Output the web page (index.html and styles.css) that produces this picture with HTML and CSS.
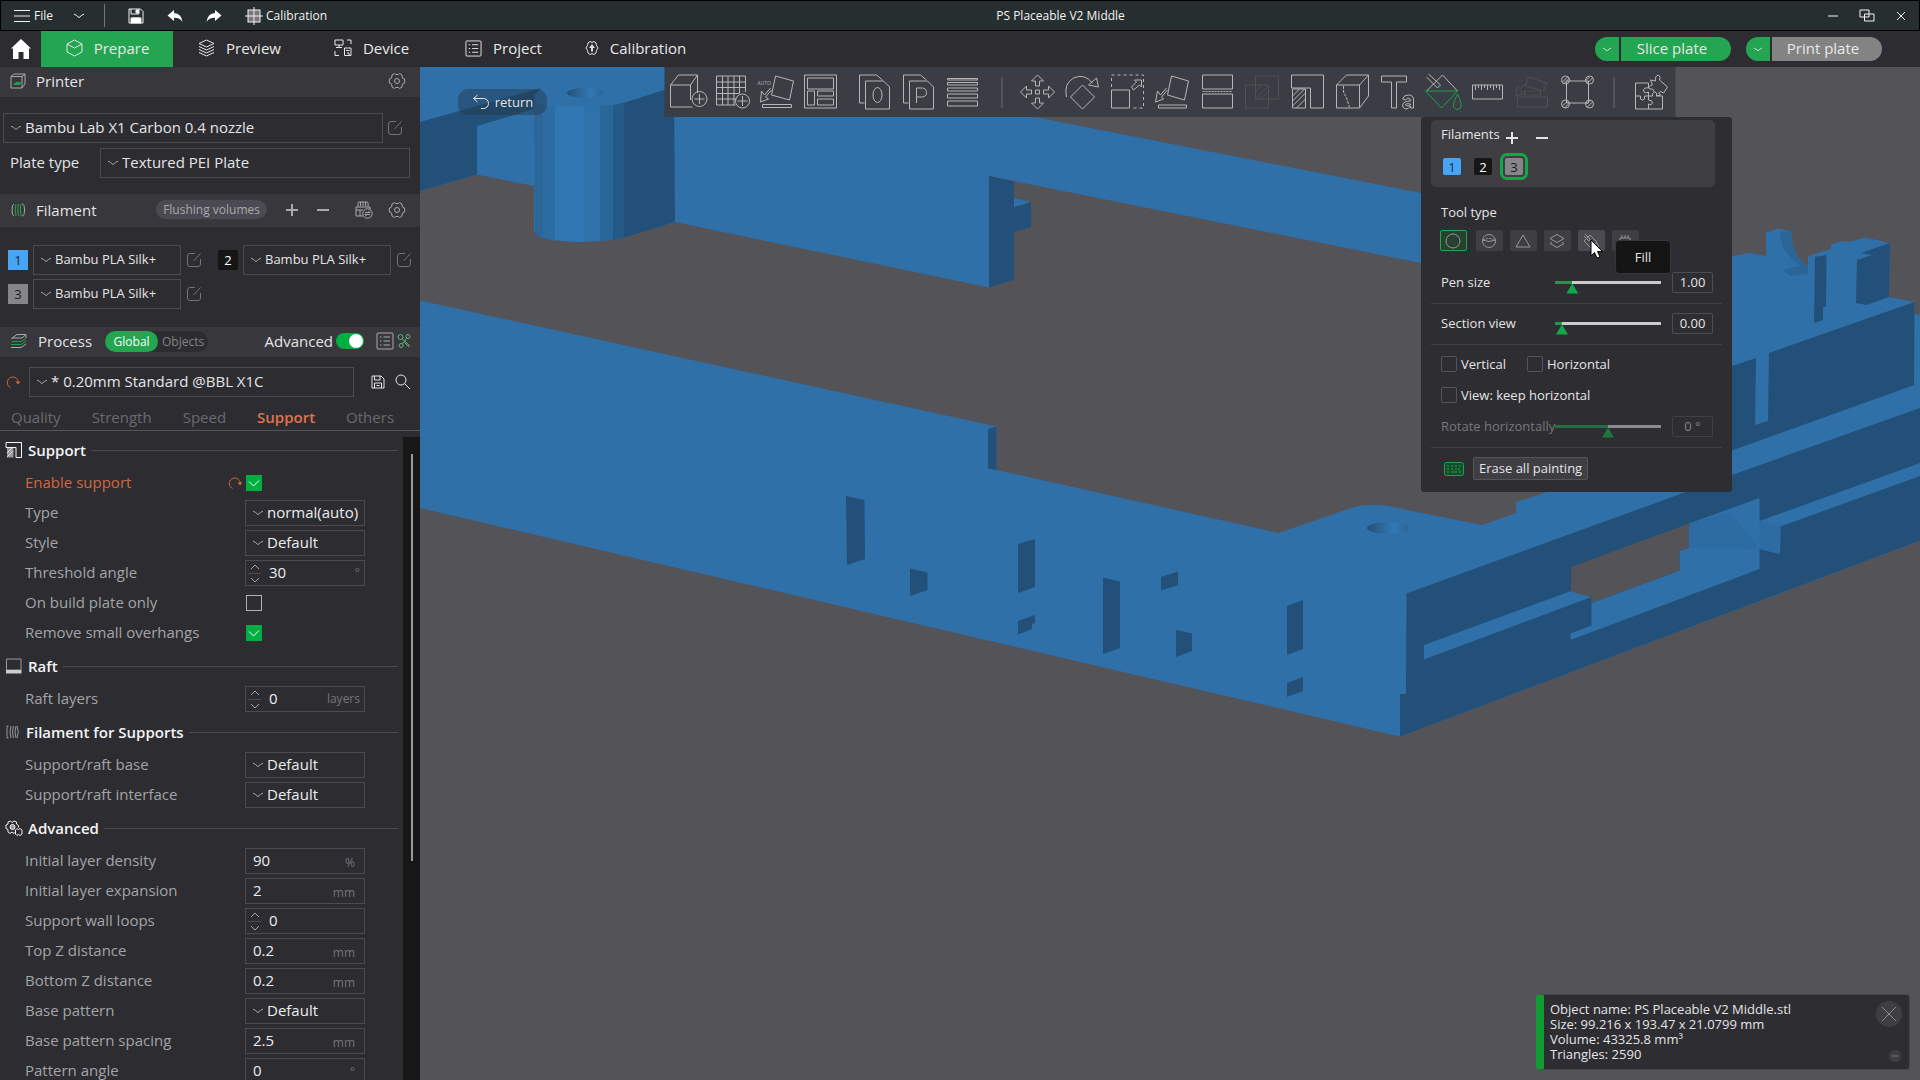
FILE: index.html
```html
<!DOCTYPE html>
<html lang="en">
<head>
  <meta charset="UTF-8" />
  <meta name="viewport" content="width=device-width, initial-scale=1" />
  <title>PS Placeable V2 Middle</title>
  <link rel="stylesheet" href="styles.css">
</head>
<body>

  <!-- shared icons -->
  <svg class="defs" width="0" height="0" aria-hidden="true">
    <symbol id="chev" viewBox="0 0 12 6"><path d="M1 1.2Q3 1.6 6 4.6Q9 1.6 11 1.2"/></symbol>
    <symbol id="up" viewBox="0 0 10 6"><path d="M1 5L5 1L9 5"/></symbol>
    <symbol id="down" viewBox="0 0 10 6"><path d="M1 1L5 5L9 1"/></symbol>
    <symbol id="edit" viewBox="0 0 16 16"><path d="M9 1.5H4Q1.5 1.5 1.5 4V12Q1.5 14.500 4 14.500H12Q14.500 14.500 14.500 12V7M7.500 9L14.500 1.500"/></symbol>
    <symbol id="gear" viewBox="0 0 18 18"><path d="M6.500 1.500L7.500 2.500H10.500L11.500 1.500L14 3L14.200 5L15 6.500L16.700 7V11L15 11.500L14.200 13L14 15L11.500 16.500L10.500 15.500H7.500L6.500 16.500L4 15L3.800 13L3 11.500L1.300 11V7L3 6.500L3.800 5L4 3Z"/><circle cx="9" cy="9" r="2.500"/></symbol>
    <symbol id="plus" viewBox="0 0 12 12"><path d="M6 0V12M0 6H12"/></symbol>
    <symbol id="minus" viewBox="0 0 12 12"><path d="M0 6H12"/></symbol>
    <symbol id="reset" viewBox="0 0 14 14"><path d="M4.500 12.500A5.500 5.500 0 1 1 12.300 7"/><path d="M9.500 6.500H14.300L12 9.500Z" fill="currentColor" stroke="none"/></symbol>
    <symbol id="list" viewBox="0 0 18 18"><rect x="1" y="1" width="16" height="16" rx="1"/><path d="M4 5H5.500M7.500 5H14M4 9H5.500M7.500 9H14M4 13H5.500M7.500 13H14"/></symbol>
    <symbol id="check" viewBox="0 0 16 16"><path d="M3 6.500L7.500 11L13 5.500"/></symbol>
  </svg>

  <header class="titlebar">
    <button class="file-btn"><svg width="16" height="14"><path d="M0 1.500H16M0 7H16M0 12.500H16"/></svg>File</button>
    <button class="file-more" aria-label="File menu"><svg width="12" height="6"><use href="#chev"/></svg></button>
    <span class="bar-sep"></span>
    <button aria-label="Save"><svg width="16" height="16" viewBox="0 0 16 16"><path d="M1 1H12.500L15 3.500V15H1ZM3 1V6H11V1M3.500 15V10H12.500V15"/><path d="M3 10H13V15H3ZM8 2H10.500V5H8Z" fill="#fff"/></svg></button>
    <button aria-label="Undo"><svg width="16" height="14" viewBox="0 0 16 14"><path d="M7 1V4Q14.500 4.500 15.500 13Q12.500 8.500 7 8.800V12L.5 6.500Z" fill="#fff" stroke="none"/></svg></button>
    <button aria-label="Redo"><svg width="16" height="14" viewBox="0 0 16 14"><path d="M9 1V4Q1.500 4.500 .5 13Q3.500 8.500 9 8.800V12L15.500 6.500Z" fill="#fff" stroke="none"/></svg></button>
    <button class="calib"><svg width="18" height="18" viewBox="0 0 18 18"><rect x="3" y="3" width="12" height="12" fill="#777"/><path d="M9 0V6M9 12V18M0 9H6M12 9H18M6 9H12M9 6V12" /></svg>Calibration</button>
    <h1>PS Placeable V2 Middle</h1>
    <div class="win-controls">
      <button aria-label="Minimize"><svg width="10" height="10"><path d="M0 5H10"/></svg></button>
      <button aria-label="Restore"><svg width="16" height="14" viewBox="0 0 16 14"><path d="M1 1H10V8H1ZM5.500 5H15V12H5.500Z"/></svg></button>
      <button aria-label="Close"><svg width="10" height="10"><path d="M1 1L9 9M9 1L1 9"/></svg></button>
    </div>
  </header>

  <nav class="tabbar">
    <a class="home" href="#" aria-label="Home"><svg width="20" height="20" viewBox="0 0 20 20"><path d="M10 0L20 9.500H18V20H12.500V13H7.500V20H2V9.500H0Z" fill="#fff" stroke="none"/></svg></a>
    <a class="tab active" href="#"><svg width="17" height="18" viewBox="0 0 17 18"><path d="M8.500 1L16 5V13L8.500 17L1 13V5ZM1 5L8.500 9L16 5"/></svg>Prepare</a>
    <a class="tab" href="#"><svg width="17" height="18" viewBox="0 0 17 18"><path d="M8.500 1L16 4.500L8.500 8L1 4.500ZM1 7.500L8.500 11L16 7.500M1 10.500L8.500 14L16 10.500M1 13.500L8.500 17L16 13.500"/></svg>Preview</a>
    <a class="tab" href="#"><svg width="18" height="18" viewBox="0 0 18 18"><path d="M1 1H9V6H1ZM5 6V8M2 8.500H8M13 1H17V5M1 12V16.500H5M10.500 9H17V16.500H10.500ZM12 11.500H15.500M13 14H15V16"/></svg>Device</a>
    <a class="tab" href="#"><svg width="17" height="17"><use href="#list"/></svg>Project</a>
    <a class="tab" href="#"><svg width="14" height="16" viewBox="0 0 14 16"><path d="M5 1.500L7 2.500L9 1.500L11 3L11.500 5.500L13 8L11.500 10.500L11 13L9 14.500L7 13.500L5 14.500L3 13L2.500 10.500L1 8L2.500 5.500L3 3Z"/><path d="M7 4L10 8H8V11.500H6V8H4Z" fill="#ddd" stroke="none"/></svg>Calibration</a>
    <div class="plate-actions">
      <div class="pill">
        <button class="pill-drop" aria-label="Slice options"><svg width="10" height="5"><use href="#chev"/></svg></button>
        <button class="pill-main">Slice plate</button>
      </div>
      <div class="pill">
        <button class="pill-drop" aria-label="Print options"><svg width="10" height="5"><use href="#chev"/></svg></button>
        <button class="pill-main off">Print plate</button>
      </div>
    </div>
  </nav>

  <div class="workspace">

    <aside class="sidebar">
      <div class="head">
        <svg width="16" height="16" viewBox="0 0 16 16"><path d="M1 3.500L4 1H15V11L12 15H1ZM1 3.500H12L15 1M12 3.500V15"/><path d="M3 12H10L11 9H6Z" fill="#1fa04c" stroke="none"/></svg>
        <h2>Printer</h2>
        <button class="push" aria-label="Printer settings"><svg width="18" height="18"><use href="#gear"/></svg></button>
      </div>
      <div class="printer">
        <div class="line">
          <div class="select wide"><svg width="12" height="6"><use href="#chev"/></svg><select aria-label="Printer"><option>Bambu Lab X1 Carbon 0.4 nozzle</option></select></div>
          <button class="edit" aria-label="Edit printer"><svg width="16" height="16"><use href="#edit"/></svg></button>
        </div>
        <div class="line plate">
          <label for="plate">Plate type</label>
          <div class="select wide"><svg width="12" height="6"><use href="#chev"/></svg><select id="plate"><option>Textured PEI Plate</option></select></div>
        </div>
      </div>

      <div class="head head-filament">
        <svg width="16" height="16" viewBox="0 0 16 16"><path d="M4 2Q2 2 2 8Q2 14 4 14M12 2Q14.500 2 14.500 8Q14.500 14 12 14"/><path d="M6 2Q4.500 8 6 14M8.500 2Q7 8 8.500 14M11 2Q9.500 8 11 14" stroke="#1fa04c"/></svg>
        <h2>Filament</h2>
        <button class="flush push">Flushing volumes</button>
        <button aria-label="Add filament"><svg class="bold" width="12" height="12"><use href="#plus"/></svg></button>
        <button aria-label="Remove filament"><svg class="bold" width="12" height="12"><use href="#minus"/></svg></button>
        <button class="ams" aria-label="Sync filaments"><svg width="18" height="18" viewBox="0 0 18 18"><path d="M3 6V2Q3 1 4 1H12Q13 1 13 2V6M5.500 1V5M8 1V5M10.500 1V5M1 6H15V9M1 6V15H8M5 9V15M1 9H8"/><circle cx="12.500" cy="12.500" r="4.700"/><path d="M10 11.500H15L13.500 10M15 13.500H10L11.500 15"/></svg></button>
        <button aria-label="Filament settings"><svg width="18" height="18"><use href="#gear"/></svg></button>
      </div>
      <div class="filaments">
        <div class="filament"><span class="chip blue">1</span><div class="select"><svg width="12" height="6"><use href="#chev"/></svg><select aria-label="Filament 1"><option>Bambu PLA Silk+</option></select></div><button class="edit" aria-label="Edit filament 1"><svg width="16" height="16"><use href="#edit"/></svg></button></div>
        <div class="filament"><span class="chip black">2</span><div class="select"><svg width="12" height="6"><use href="#chev"/></svg><select aria-label="Filament 2"><option>Bambu PLA Silk+</option></select></div><button class="edit" aria-label="Edit filament 2"><svg width="16" height="16"><use href="#edit"/></svg></button></div>
        <div class="filament"><span class="chip gray">3</span><div class="select"><svg width="12" height="6"><use href="#chev"/></svg><select aria-label="Filament 3"><option>Bambu PLA Silk+</option></select></div><button class="edit" aria-label="Edit filament 3"><svg width="16" height="16"><use href="#edit"/></svg></button></div>
      </div>

      <div class="head head-process">
        <svg width="18" height="16" viewBox="0 0 18 16"><path d="M2 5L7 1.500H16L12 5ZM2 5V6M1 14.500H11L16 11M16 2V5"/><path d="M2 8.500H11L16 5.500M1 11.500H11L16 8" stroke="#1fa04c"/></svg>
        <h2>Process</h2>
        <div class="scope"><button class="on">Global</button><button>Objects</button></div>
        <label class="adv push" for="adv">Advanced</label>
        <input class="toggle" type="checkbox" id="adv" checked>
        <button class="listbtn" aria-label="Parameter list"><svg width="18" height="18"><use href="#list"/></svg></button>
        <button class="nodes" aria-label="Compare presets"><svg width="14" height="16" viewBox="0 0 14 16"><circle cx="3.500" cy="4" r="2.500"/><circle cx="11" cy="3.500" r="2"/><circle cx="4" cy="12.500" r="2"/><path d="M9.700 5.200L5.300 11M5.500 6L13 13M7.500 9.500L12 14"/></svg></button>
      </div>
      <div class="preset line">
        <button class="orange" aria-label="Reset preset"><svg width="14" height="14"><use href="#reset"/></svg></button>
        <div class="select wide"><svg width="12" height="6"><use href="#chev"/></svg><select aria-label="Process preset"><option>* 0.20mm Standard @BBL X1C</option></select></div>
        <button class="save" aria-label="Save preset"><svg width="14" height="14" viewBox="0 0 14 14"><path d="M1 1H10L13 4V13H1ZM3.500 1V5H9V1M3.500 13V8H10.500V13M5.500 10.500H8.500"/></svg></button>
        <button aria-label="Search"><svg width="16" height="16" viewBox="0 0 16 16"><circle cx="6" cy="6" r="5"/><path d="M9.500 9.500L15 15"/></svg></button>
      </div>
      <div class="subtabs">
        <a href="#">Quality</a><a href="#">Strength</a><a href="#">Speed</a><a class="active" href="#">Support</a><a href="#">Others</a>
      </div>

      <div class="settings">
        <form class="groups">
          <section>
            <h3><svg width="18" height="18" viewBox="0 0 18 18"><path d="M1 1.500H16.500V16.500H11V6.500H1Z"/><path d="M2 7H8.500V16.500H2Z" fill="#999" stroke="none"/><path d="M2 12L7 7M2 16L8 10" stroke="#ddd"/></svg>Support</h3>
            <div class="row changed"><label for="s1">Enable support</label><button type="button" class="orange" aria-label="Reset"><svg width="14" height="14"><use href="#reset"/></svg></button><span class="check"><input type="checkbox" id="s1" checked><svg width="16" height="16"><use href="#check"/></svg></span></div>
            <div class="row"><label for="s2">Type</label><div class="select"><svg width="12" height="6"><use href="#chev"/></svg><select id="s2"><option>normal(auto)</option></select></div></div>
            <div class="row"><label for="s3">Style</label><div class="select"><svg width="12" height="6"><use href="#chev"/></svg><select id="s3"><option>Default</option></select></div></div>
            <div class="row"><label for="s4">Threshold angle</label><div class="field"><span class="spin"><svg width="10" height="6"><use href="#up"/></svg><svg width="10" height="6"><use href="#down"/></svg></span><input id="s4" type="text" value="30"><span class="unit deg">°</span></div></div>
            <div class="row"><label for="s5">On build plate only</label><span class="check"><input type="checkbox" id="s5"><svg width="16" height="16"><use href="#check"/></svg></span></div>
            <div class="row"><label for="s6">Remove small overhangs</label><span class="check"><input type="checkbox" id="s6" checked><svg width="16" height="16"><use href="#check"/></svg></span></div>
          </section>
          <section>
            <h3><svg width="18" height="18" viewBox="0 0 18 18"><path d="M1.500 2H16V13H1.500Z" stroke="#999"/><path d="M1 13H16.500V16.500H1Z" fill="#ccc" stroke="none"/></svg>Raft</h3>
            <div class="row"><label for="s7">Raft layers</label><div class="field"><span class="spin"><svg width="10" height="6"><use href="#up"/></svg><svg width="10" height="6"><use href="#down"/></svg></span><input id="s7" type="text" value="0"><span class="unit long">layers</span></div></div>
          </section>
          <section>
            <h3><svg width="16" height="16" viewBox="0 0 16 16"><path d="M3.500 2H2V14H3.500M6 2Q4 8 6 14M8.500 2Q6.500 8 8.500 14M11 2Q9 8 11 14M12 2Q14.500 8 12 14" stroke="#999"/></svg>Filament for Supports</h3>
            <div class="row"><label for="s8">Support/raft base</label><div class="select"><svg width="12" height="6"><use href="#chev"/></svg><select id="s8"><option>Default</option></select></div></div>
            <div class="row"><label for="s9">Support/raft interface</label><div class="select"><svg width="12" height="6"><use href="#chev"/></svg><select id="s9"><option>Default</option></select></div></div>
          </section>
          <section>
            <h3><svg width="18" height="18" viewBox="0 0 18 18"><path d="M10.500 13L9 14.500L7 13L5 14.500L3 13V10.500L1 9.500V6L3 5V3L5.500 2L7 3.500L9 2L11.500 3V5L13.500 6.500V8.500"/><circle cx="7.500" cy="8" r="2.500" fill="#999"/><path d="M12 9.500L13.500 10.500L15 9.500L17 11V13L17 15L15 16.500L13.500 15.500L12 16.500L10.500 15V11Z"/></svg>Advanced</h3>
            <div class="row"><label for="a1">Initial layer density</label><div class="field"><input id="a1" type="text" value="90"><span class="unit">%</span></div></div>
            <div class="row"><label for="a2">Initial layer expansion</label><div class="field"><input id="a2" type="text" value="2"><span class="unit">mm</span></div></div>
            <div class="row"><label for="a3">Support wall loops</label><div class="field"><span class="spin"><svg width="10" height="6"><use href="#up"/></svg><svg width="10" height="6"><use href="#down"/></svg></span><input id="a3" type="text" value="0"></div></div>
            <div class="row"><label for="a4">Top Z distance</label><div class="field"><input id="a4" type="text" value="0.2"><span class="unit">mm</span></div></div>
            <div class="row"><label for="a5">Bottom Z distance</label><div class="field"><input id="a5" type="text" value="0.2"><span class="unit">mm</span></div></div>
            <div class="row"><label for="a6">Base pattern</label><div class="select"><svg width="12" height="6"><use href="#chev"/></svg><select id="a6"><option>Default</option></select></div></div>
            <div class="row"><label for="a7">Base pattern spacing</label><div class="field"><input id="a7" type="text" value="2.5"><span class="unit">mm</span></div></div>
            <div class="row"><label for="a8">Pattern angle</label><div class="field"><input id="a8" type="text" value="0"><span class="unit deg2">°</span></div></div>
          </section>
        </form>
        <div class="track"><div class="thumb"></div></div>
      </div>
    </aside>

    <main class="canvas">
      <!-- 3D view -->
      <svg class="model" viewBox="420 67 1500 1013" preserveAspectRatio="xMinYMin slice" role="img" aria-label="PS Placeable V2 Middle">
        <defs>
          <linearGradient id="hole"><stop offset="0" stop-color="#225078"/><stop offset=".35" stop-color="#2b6699"/><stop offset=".65" stop-color="#3179b5"/><stop offset="1" stop-color="#2a6598"/></linearGradient>
        </defs>
        <g class="lit">
          <path d="M420 67H676V222L620 238L534 232V186L477 174.500L420 191Z"/>
          <path d="M674 67H1031V117Q1040 117.500 1060 122L1421 193V263L989 176V287.500L675 222Z"/>
          <path d="M420 300.500L996.500 426.500V470L1278.500 533L1354 507Q1377 502 1406.500 510L1482.500 525L1516 513V502L1547 492L1600 420H1732V256L1749 253L1766 256V232.500L1778 228.500L1791 231Q1793 259 1808 266V256L1831 249V244.500L1843 241L1849 242L1865 237.500L1890 243L1889 297L1914.500 302V314L1920 315V540.500L1400 736.500L420 508Z"/>
        </g>
        <g class="dark">
          <path d="M420 122L541 88L534 95V109L477 126V174.500L420 191Z"/>
          <path d="M620 104L664 90H674L675 222L624 237.500Z"/>
          <path d="M989 176L1014 181.500V279.500L989 287.500ZM1014 207L1031 202V227L1014 232Z"/>
          <path d="M988 429L996.500 426.500V470L988 468.500Z"/>
          <path d="M846 496L864.500 500L865 559L847 565ZM910 568.500L927.500 572.500V590L910 596ZM1018 544L1035 539V587L1018 593ZM1018 621L1035 615V623L1032 624V629L1018 634.500ZM1103 577.500L1120 581.500V648L1103 654ZM1161 577L1178 571.500V585L1161 590.500ZM1176 630L1192 633.500V651L1176 657ZM1287 606L1303 600V649L1287 655ZM1287 683L1303 677V691L1287 697Z"/>
          <path d="M1732 366L1756 358L1755 425L1768 421L1769 353L1914.500 302L1914 385L1732 450.500Z"/>
          <path d="M1815 257L1826.500 255L1826 307H1823V320L1814 323Z"/>
          <path d="M1857 260L1872 255L1861 253L1890 243L1889 297L1866.500 305L1856 303Z"/>
          <path d="M1406.500 593.500L1686 492L1732 475L1920 408V540.500L1400 736.500V694H1406Z"/>
        </g>
        <g class="lit">
          <path d="M1014 198L1031 202L1014 207Z"/>
          <path d="M1920 463L1759.500 521V498L1689 523.500V548L1679.500 550.500V570.500L1591.500 603V625.500L1570.500 633.500V640L1759.500 569V549L1780 554L1780.500 526.500L1920 476Z"/>
          <path d="M1424 645L1571 591L1591.500 597L1424 659.500Z"/>
        </g>
        <path d="M1571 567L1689 523.500V548L1679.500 550.500V570.500L1591.500 603V597L1571 591.500Z" fill="#545358"/>
        <path d="M1730 512L1759.500 549L1689 548V523.500ZM1759.500 521L1780.500 526.500L1780 554L1759.500 549Z" fill="#2d6ca2"/>
        <path d="M1780 232L1791 231Q1793 259 1808 266V274L1790 276L1783 270L1800 266Q1780 252 1780 232Z" fill="#2a6598"/>
        <!-- corner post -->
        <path d="M534 97Q537 104 543 105V239Q535 236 535 230Z" fill="#2b6699"/>
        <path d="M543 105L555 106V241L543 238Z" fill="#2d6ca3"/>
        <path d="M555 106H584V242Q568 242 555 240Z" fill="#3076b2"/>
        <path d="M584 106H600V241L584 242Z" fill="#2f71ab"/>
        <path d="M600 106L613 105V240L600 241.500Z" fill="#2a6699"/>
        <path d="M613 105L624 103V237.500L613 240Z" fill="#245a88"/>
        <ellipse cx="585" cy="93" rx="18" ry="5" fill="url(#hole)"/>
        <ellipse cx="1388" cy="528" rx="21" ry="6" fill="url(#hole)"/>
      </svg>

      <button class="return"><svg width="18" height="16" viewBox="0 0 18 16"><path d="M5.500 1L1.500 4.500L5.500 8M1.500 4.500H11.500A5 5 0 0 1 11.500 14.500H9"/></svg>return</button>

      <div class="toolbar">
        <div class="tools small">
          <button aria-label="Add"><svg viewBox="0 0 36 36"><path d="M0 11L8 1H27L20 11ZM0 11V33H22M20 11V26M27 1V19"/><circle cx="29" cy="25" r="7.500"/><path d="M29 20V30M24 25H34"/></svg></button>
          <button aria-label="Add plate"><svg viewBox="0 0 36 36"><path d="M2 2H31V18M2 2V31H21M2 8H31M2 13.500H31M2 19.500H25M2 25H22M8 2V31M13.500 2V31M19.500 2V31M25 2V19"/><circle cx="28" cy="27" r="7"/><path d="M28 22V32M23 27H33"/></svg></button>
          <button aria-label="Auto orient"><svg viewBox="0 0 36 36"><path d="M17 2L35 7L31 26L13 21ZM12 14L6 21L3 17L2 28L10 25L7 23L13 16M4 30.500H33V33.500H4Z"/><text x="-1" y="11">AUTO</text></svg></button>
          <button aria-label="Arrange"><svg viewBox="0 0 36 36"><path d="M2 1H34V34H2ZM5 4H31V15H5ZM5 17H12V31H5ZM15 17H31V22H15ZM15 25H31V31H15Z"/></svg></button>
        </div>
        <div class="tools small pages">
          <button aria-label="Objects"><svg viewBox="0 0 36 36"><path d="M8 29H3V1H20L26 6M9 7H27L33 13V35H9Z"/><ellipse cx="21" cy="21" rx="4.500" ry="7.500"/></svg></button>
          <button aria-label="Parts"><svg viewBox="0 0 36 36"><path d="M8 29H3V1H20L26 6M9 7H27L33 13V35H9ZM16 29V14H21Q26 14 26 18.500Q26 23 21 23H16"/></svg></button>
          <button aria-label="Variable layer height"><svg viewBox="0 0 36 36"><path d="M3 4.500H33V6H3ZM3 8.500H33V11H3ZM3 14H33V17H3ZM3 20H33V24H3ZM3 27H33V32H3Z"/></svg></button>
        </div>
        <span class="tool-sep"></span>
        <div class="tools">
          <button aria-label="Move"><svg viewBox="0 0 36 36"><path d="M18 1L24 7H20V12H16V7H12ZM18 35L24 29H20V24H16V29H12ZM1 18L7 12V16H12V20H7V24ZM35 18L29 12V16H24V20H29V24ZM16 16H20V20H16Z"/></svg></button>
          <button aria-label="Rotate"><svg viewBox="0 0 36 36"><path d="M18 11L30 23L18 35L6 23ZM2 23Q-1 10 9 4Q20 -1 28 9M24 11L34 13L32 4Z"/></svg></button>
          <button aria-label="Scale"><svg viewBox="0 0 36 36"><path d="M2 16H20V34H2Z"/><path d="M2 13V1H34V34H22" stroke-dasharray="3 3"/><path d="M22 13L27 8L25 6H32V13L30 11L24 16Z"/></svg></button>
          <button aria-label="Lay on face"><svg viewBox="0 0 36 36"><path d="M17 2L34 7L30 26L13 21ZM12 14L6 21L3 17L1 28L9 25L7 23L13 16M4 31H32V34H4Z"/></svg></button>
          <button aria-label="Cut"><svg viewBox="0 0 36 36"><path d="M3 1H33V15H3ZM3 20H33V34H3Z"/><path d="M3 17.500H33" stroke-dasharray="2 1"/></svg></button>
          <button class="dim" aria-label="Mesh boolean"><svg viewBox="0 0 36 36"><path d="M11 2H34V25H11ZM1 11H24V34H1ZM12 17L17 12M12 24L23 13M16 25L23 18"/></svg></button>
          <button aria-label="Support painting"><svg viewBox="0 0 36 36"><path d="M2 1H34V34H21V14H2Z"/><path d="M3 15H16V34H3ZM3 22L10 15M3 27L15 15M3 32L16 19M7 34L16 25"/></svg></button>
          <button aria-label="Seam painting"><svg viewBox="0 0 36 36"><path d="M2 11L12 1H34L25 11ZM2 11V34H25V11M34 1V22L25 34"/><path d="M9 12V18L12 24L15 33" stroke-dasharray="3 1"/></svg></button>
          <button aria-label="Text shape"><svg viewBox="0 0 36 36"><path d="M2 2H27V8H17V34H12V8H2Z"/><path d="M23 25Q24 21 29 21Q34 21 34 26V34H31V32Q29 35 26 35Q23 34 23 31Q24 27 31 27Q31 24 28 24L26 26ZM31 30Q26 29 26 31Q28 33 31 31Z"/></svg></button>
          <button aria-label="Color painting"><svg viewBox="0 0 36 36"><path d="M2 17L18 1L33 17M4 0L16 11L13 14L2 3"/><path d="M1 17H33L17 34ZM33 20Q28 30 29 33Q31 37 35 35Q39 32 33 20Z" stroke="#1fa04c"/></svg></button>
          <button aria-label="Measure"><svg viewBox="0 0 36 36"><path d="M3 11H33V25H3ZM6 11V16M9 11V14M12 11V16M15 11V14M18 11V16M21 11V14M24 11V16M27 11V14M30 11V16"/></svg></button>
          <button class="dim" aria-label="Assembly measure"><svg viewBox="0 0 36 36"><path d="M14 3L32 9L29 17L11 12ZM10 10L6 15L3 12L1 22L8 20L6 17M10 17V22M26 17V22M3 23H33V33H3Z"/><path d="M10 17H26M10 21H26" stroke-dasharray="2 1"/></svg></button>
          <button aria-label="Brim ears"><svg viewBox="0 0 36 36"><path d="M7 7H29V29H7Z"/><circle cx="6" cy="6" r="4"/><circle cx="30" cy="6" r="4"/><circle cx="6" cy="30" r="4"/><circle cx="30" cy="30" r="4"/><path d="M3 8L8 3M4 10L10 4M28 9L33 4M27 6L30 3M3 32L8 27M5 34L10 29M28 33L33 28M27 30L31 26"/></svg></button>
        </div>
        <span class="tool-sep narrow"></span>
        <div class="tools">
          <button aria-label="Assembly view"><svg viewBox="0 0 36 36"><path d="M3 9H16V14Q11 13 11 17Q12 20 16 18V22H12Q13 26 10 26Q7 26 8 22H3ZM3 22V35H30V22H24Q25 18 22 18Q19 19 20 22H16V26Q20 26 20 29Q19 32 16 30V35M18 6L23 7Q22 2 26 1Q29 3 27 6L35 13L31 19Q28 16 26 19L28 21L24 22M18 6L20 11Q15 12 17 15L20 15L22 18"/></svg></button>
        </div>
      </div>

      <section class="paint">
        <div class="colors">
          <div class="colors-head"><h4>Filaments</h4><button aria-label="Add"><svg class="bold" width="12" height="12"><use href="#plus"/></svg></button><button aria-label="Remove"><svg class="bold" width="12" height="12"><use href="#minus"/></svg></button></div>
          <div class="swatches"><button class="chip blue">1</button><button class="chip black">2</button><button class="chip gray picked">3</button></div>
        </div>
        <h4 class="tool-title">Tool type</h4>
        <div class="types">
          <button class="picked" aria-label="Circle"><svg width="16" height="16" viewBox="0 0 16 16"><circle cx="8" cy="8" r="7"/></svg></button>
          <button aria-label="Sphere"><svg width="16" height="16" viewBox="0 0 16 16"><circle cx="8" cy="8" r="6.500"/><path d="M1.500 7Q8 10 14.500 7" /><path d="M2 7Q8 4 14 7" stroke-dasharray="2 1"/></svg></button>
          <button aria-label="Triangle"><svg width="16" height="16" viewBox="0 0 16 16"><path d="M8 2L15 14H1Z"/></svg></button>
          <button aria-label="Height range"><svg width="16" height="16" viewBox="0 0 16 16"><path d="M8 1.500L15 5.500L8 9.500L1 5.500ZM3 9L1 10.500L8 14.500L15 10.500L13 9"/></svg></button>
          <div class="hovered">
            <button aria-label="Fill"><svg width="16" height="16" viewBox="0 0 16 16"><path d="M1 8L7 2L14 9L8 15ZM2 1L7 6L6 8L1 3M14 10L16 14"/></svg></button>
            <span class="tip">Fill</span>
            <svg class="cursor" width="14" height="20" viewBox="0 0 14 20"><path d="M1 1V17L4.500 13.500L7 19L10 18L7.500 12.500H12.500Z"/></svg>
          </div>
          <button aria-label="Gap fill"><svg width="16" height="16" viewBox="0 0 16 16"><path d="M3 5H13V12H3ZM5 2V5M8 2V5M11 2V5M1 8H3M13 8H15M5 12V14M11 12V14"/></svg></button>
        </div>
        <div class="slider-row"><label for="pen">Pen size</label><input type="range" id="pen" value="12" style="--fill: 16%"><input class="num" type="text" value="1.00" aria-label="Pen size value"></div>
        <div class="slider-row ruled"><label for="sec">Section view</label><input type="range" id="sec" value="1" style="--fill: 7%"><input class="num" type="text" value="0.00" aria-label="Section view value"></div>
        <div class="checks ruled">
          <label><input type="checkbox">Vertical</label><label><input type="checkbox">Horizontal</label>
          <label class="full"><input type="checkbox">View: keep horizontal</label>
        </div>
        <div class="slider-row last"><label for="rot">Rotate horizontally</label><input type="range" id="rot" value="50" style="--fill: 50%" disabled><input class="num" type="text" value="0 °" aria-label="Rotation" disabled></div>
        <div class="paint-foot ruled">
          <svg width="20" height="14" viewBox="0 0 20 14"><rect x=".5" y=".5" width="19" height="13" rx="2" fill="#174d2b"/><path d="M3 4H5M7 4H9M11 4H13M15 4H17M3 7H5M7 7H9M11 7H13M15 6V9M3 10H5M7 10H13M15 10H17"/></svg>
          <button>Erase all painting</button>
        </div>
      </section>

      <div class="notice">
        <p>Object name: PS Placeable V2 Middle.stl<br>Size: 99.216 x 193.47 x 21.0799 mm<br>Volume: 43325.8 mm³<br>Triangles: 2590</p>
        <div class="notice-btns">
          <button class="close" aria-label="Close"><svg width="16" height="16"><path d="M1 1L15 15M15 1L1 15"/></svg></button>
          <button class="mini" aria-label="Collapse"><svg width="6" height="6"><path d="M0 3H6"/></svg></button>
        </div>
      </div>
    </main>
  </div>

</body>
</html>
```
FILE: styles.css
```css
* {
  box-sizing: border-box;
}
body {
  margin: 0;
  height: 100vh;
  display: flex;
  flex-direction: column;
  overflow: hidden;
  background: #2d2d31;
  color: #e4e4e6;
  font-family: "Open Sans", "Noto Sans", sans-serif;
  font-size: 15px;
}
h1, h2, h3, h4, p {
  margin: 0;
  font-weight: normal;
}
svg {
  display: block;
  flex: none;
  fill: none;
  stroke: currentColor;
}
.bold {
  stroke-width: 2;
}
.defs {
  position: absolute;
}
button {
  display: flex;
  align-items: center;
  justify-content: center;
  padding: 0;
  border: none;
  background: none;
  color: inherit;
  font: inherit;
}
input, select {
  font: inherit;
  color: inherit;
  margin: 0;
}
a {
  color: inherit;
  text-decoration: none;
}
.push {
  margin-left: auto;
}

/* title bar */
.titlebar {
  display: flex;
  align-items: center;
  height: 31px;
  padding: 0 13px;
  background: #262e30;
  border: 1px solid #000;
  color: #f2f2f2;
  font-size: 12px;
}
.titlebar > button {
  margin-right: 23px;
}
.titlebar .file-btn {
  gap: 4px;
  margin-right: 20px;
}
.titlebar .file-more {
  margin-right: 19px;
}
.bar-sep {
  width: 1px;
  height: 23px;
  margin-right: 23px;
  background: #777;
}
.titlebar .calib {
  gap: 3px;
  margin-right: 0;
}
.titlebar h1 {
  flex: 1;
  text-align: center;
  font-size: 12px;
}
.win-controls {
  display: flex;
  gap: 21px;
  padding-left: 34px;
}

/* tab bar */
.tabbar {
  display: flex;
  height: 36px;
  color: #e8e8e8;
}
.home {
  display: flex;
  align-items: center;
  justify-content: center;
  width: 34px;
  margin-right: 7px;
  padding-left: 7px;
}
.tab {
  display: flex;
  align-items: center;
  justify-content: center;
  gap: 11px;
  width: 132px;
  padding: 0 0 2px 1px;
}
.tab.active {
  background: #24a552;
}
.plate-actions {
  display: flex;
  align-items: center;
  gap: 15px;
  margin-left: auto;
  padding-right: 38px;
}
.pill {
  display: flex;
  gap: 2px;
  height: 24px;
}
.pill-drop {
  width: 24px;
  background: #24a552;
  border-radius: 12px 0 0 12px;
}
.pill-main {
  width: 110px;
  padding: 0 8px 2px 0;
  background: #24a552;
  border-radius: 0 12px 12px 0;
}
.pill-main.off {
  background: #838384;
}

.workspace {
  flex: 1;
  display: flex;
  min-height: 0;
}

/* sidebar */
.sidebar {
  flex: none;
  display: flex;
  flex-direction: column;
  width: 420px;
  min-height: 0;
}
.head {
  flex: none;
  display: flex;
  align-items: center;
  height: 30px;
  padding: 0 14px 2px 10px;
  background: #38373c;
}
.head > svg, .head button {
  color: #a9a9ab;
}
.head h2 {
  margin-left: 10px;
  font-size: 15px;
}
.head-filament {
  height: 33px;
}
.head-filament button + button {
  margin-left: 19px;
}
.head-filament .ams {
  margin-left: 26px;
}
.head-filament button.ams + button {
  margin-left: 15px;
}
.head .flush {
  height: 19px;
  padding: 0 7px 1px;
  border-radius: 10px;
  background: #4b4a52;
  font-size: 12px;
}
.line {
  display: flex;
  align-items: center;
}
.printer {
  display: flex;
  flex-direction: column;
  gap: 5px;
  padding: 16px 10px 16px 3px;
}
.printer .edit {
  margin: 0 5px 0 2px;
}
.plate label {
  width: 97px;
  padding: 0 0 2px 7px;
}
.edit {
  margin-left: 3px;
  padding: 0 2px;
  color: #747477;
}
.select {
  display: flex;
  align-items: center;
  height: 30px;
  padding-left: 6px;
  border: 1px solid #4b4b50;
}
.select svg {
  color: #a5a5a7;
}
.select select {
  flex: 1;
  min-width: 0;
  height: 100%;
  padding: 0 0 2px 3px;
  border: none;
  outline: none;
  appearance: none;
  background: none;
}
.wide {
  flex: 1;
}
.filaments {
  display: grid;
  grid-template-columns: 1fr 1fr;
  gap: 4px 8px;
  padding: 18px 0 18px 8px;
}
.filament {
  display: flex;
  align-items: center;
  font-size: 13px;
}
.filament .select {
  width: 148px;
  margin-left: 5px;
}
.chip {
  display: flex;
  align-items: center;
  justify-content: center;
  width: 20px;
  height: 20px;
  font-size: 13px;
}
.blue {
  background: #47a5f5;
  color: #1a2c3c;
}
.black {
  background: #161616;
  color: #fff;
}
.gray {
  background: #868688;
  color: #1c1c1c;
}
.head-process {
  padding-right: 9px;
}
.scope {
  display: flex;
  height: 21px;
  margin-left: 13px;
  border-radius: 11px;
  background: #2d2d31;
  font-size: 12px;
}
.scope button {
  width: 50px;
  color: #818184;
}
.scope button.on {
  width: 53px;
  border-radius: 11px;
  background: #24a552;
  color: #fff;
}
.toggle {
  width: 28px;
  height: 16px;
  margin-left: 3px;
  padding: 1px;
  appearance: none;
  border-radius: 8px;
  background: #00ae42;
}
.toggle::before {
  content: "";
  display: block;
  width: 14px;
  height: 14px;
  margin-left: auto;
  border-radius: 50%;
  background: #fff;
}
.head .listbtn {
  margin-left: 12px;
}
.head .nodes {
  margin-left: 3px;
  color: #59b97b;
}
.preset {
  padding: 10px 9px 0 6px;
}
.preset .wide {
  margin: 0 17px 0 9px;
}
.preset .save {
  margin-right: 10px;
}
.orange {
  color: #d2673f;
}
.subtabs {
  flex: none;
  display: flex;
  align-items: center;
  gap: 31px;
  height: 34px;
  padding: 7px 0 0 11px;
  border-bottom: 1px solid #54555a;
  color: #6a6a6e;
}
.subtabs .active {
  color: #e0724c;
  font-weight: 600;
}

/* settings list */
.settings {
  flex: 1;
  display: flex;
  min-height: 0;
}
.groups {
  flex: 1;
  padding: 3px 5px 0 0;
  overflow: hidden;
}
.groups section {
  padding-bottom: 2px;
}
.groups h3 {
  display: flex;
  align-items: center;
  gap: 5px;
  height: 34px;
  padding: 0 0 2px 5px;
  color: #f4f4f4;
  font-size: 15px;
  font-weight: 600;
}
.groups h3::after {
  content: "";
  flex: 1;
  height: 1px;
  background: #4b4b50;
}
.row {
  display: flex;
  align-items: center;
  height: 30px;
  padding-left: 25px;
  color: #a4a4a7;
}
.row > label {
  width: 220px;
  padding-bottom: 2px;
}
.row.changed > label {
  width: 203px;
  color: #d2673f;
}
.row .select, .field {
  width: 120px;
  height: 26px;
  color: #ececee;
}
.changed .check {
  margin-left: 4px;
}
.check {
  display: grid;
  margin-left: 1px;
}
.check > * {
  grid-area: 1 / 1;
}
.check input {
  width: 16px;
  height: 16px;
  appearance: none;
  border: 1px solid #b0b0b3;
}
.check svg {
  visibility: hidden;
  color: #fff;
  pointer-events: none;
}
.check input:checked {
  border: none;
  background: #00ae42;
}
.check input:checked + svg {
  visibility: visible;
}
.field {
  display: flex;
  align-items: center;
  border: 1px solid #4b4b50;
}
.field input {
  flex: 1;
  min-width: 0;
  padding: 0 0 2px 7px;
  border: none;
  outline: none;
  background: none;
}
.spin {
  display: flex;
  flex-direction: column;
  align-items: center;
  gap: 7px;
  width: 13px;
  margin-left: 2px;
  background: linear-gradient(#4b4b50, #4b4b50) center / 100% 1px no-repeat;
  color: #a4a4a7;
}
.spin + input {
  padding-left: 8px;
}
.unit {
  padding: 3px 9px 0 0;
  color: #747478;
  font-size: 12px;
}
.unit.long, .unit.deg {
  padding: 0 4px 1px 0;
}
.unit.deg2 {
  padding-top: 0;
}
.track {
  width: 17px;
  margin-top: 6px;
  padding: 17px 0 0 8px;
  background: #171717;
}
.thumb {
  width: 2px;
  height: 65%;
  background: #999;
}

/* 3D canvas */
.canvas {
  position: relative;
  flex: 1;
  min-width: 0;
  background: #545358;
}
.model {
  position: absolute;
  width: 100%;
  height: 100%;
  stroke: none;
}
.lit {
  fill: #2f70a8;
}
.dark {
  fill: #225078;
}
.return {
  position: absolute;
  top: 22px;
  left: 38px;
  gap: 5px;
  width: 89px;
  height: 26px;
  padding-bottom: 1px;
  border-radius: 10px;
  background: rgba(35, 55, 75, 0.45);
  font-size: 13px;
}
.toolbar {
  position: absolute;
  top: 0;
  left: 50%;
  display: flex;
  align-items: center;
  height: 50px;
  padding: 0 3px 0 2px;
  transform: translateX(-50%);
  background: #3a3d43;
  color: #b5b6b9;
}
.tools {
  display: flex;
}
.tools button {
  width: 45px;
}
.tools.small button {
  width: 44px;
}
.tools.pages {
  margin-left: 10px;
}
.tools svg {
  width: 36px;
  height: 36px;
  overflow: visible;
}
.tools text {
  fill: currentColor;
  stroke: none;
  font-size: 5px;
}
.tools .dim {
  color: #505157;
}
.tool-sep {
  width: 1px;
  height: 31px;
  margin: 0 12px 0 17px;
  background: #6b6d72;
}
.tool-sep.narrow {
  margin: 0 13px 0 14px;
}

/* painting panel */
.paint {
  position: absolute;
  top: 50px;
  right: 188px;
  width: 311px;
  height: 375px;
  padding: 3px 10px;
  border-radius: 3px;
  background: #2e2d32;
  font-size: 13px;
}
.paint h4 {
  font-size: 13px;
}
.colors {
  width: 284px;
  height: 67px;
  padding: 4px 10px 0;
  border-radius: 5px;
  background: #3f3e43;
}
.colors-head {
  display: flex;
  align-items: flex-end;
  height: 20px;
}
.colors-head h4 {
  width: 65px;
  line-height: 20px;
}
.colors-head button {
  width: 12px;
  margin-right: 18px;
}
.swatches {
  display: flex;
  align-items: center;
  gap: 13px;
  height: 48px;
  padding: 0 0 3px 2px;
}
.swatches .chip {
  width: 18px;
  height: 17px;
  border-radius: 2px;
}
.swatches .picked {
  outline: 3px solid #12a84a;
  outline-offset: 2px;
}
.tool-title {
  padding: 16px 10px 9px;
  line-height: 18px;
}
.types {
  display: flex;
  gap: 7px;
  padding-left: 9px;
}
.types button {
  width: 27px;
  height: 21px;
  padding-right: 1px;
  border-radius: 2px;
  background: #3f3e43;
  color: #97979a;
}
.types button.picked {
  margin-right: 2px;
  border: 1px solid #24a552;
  background: #28402f;
}
.hovered {
  position: relative;
}
.types .hovered button {
  background: #4b4a50;
}
.tip {
  position: absolute;
  z-index: 1;
  top: 10px;
  left: 37px;
  width: 56px;
  border: 1px solid #36363a;
  border-radius: 4px;
  background: #141414;
  line-height: 32px;
  text-align: center;
}
.cursor {
  position: absolute;
  z-index: 2;
  top: 9px;
  left: 12px;
  fill: #fff;
  stroke: #000;
}
.slider-row {
  display: flex;
  align-items: center;
  height: 41px;
  padding-left: 10px;
}
.types + .slider-row {
  height: 52px;
  padding-top: 10px;
}
.slider-row label {
  width: 114px;
  white-space: nowrap;
}
.slider-row input[type="range"] {
  width: 106px;
  height: 24px;
  appearance: none;
  background: none;
}
.slider-row input::-webkit-slider-runnable-track {
  height: 3px;
  background: linear-gradient(to right, #1c9c48 var(--fill), #cbcbcb var(--fill));
}
.slider-row input::-webkit-slider-thumb {
  width: 12px;
  height: 10px;
  margin-top: 3px;
  appearance: none;
  background: #12a84a;
  clip-path: polygon(50% 0, 100% 100%, 0 100%);
}
.num {
  width: 41px;
  height: 21px;
  margin-left: 11px;
  padding: 0;
  border: 1px solid #4d4d54;
  border-radius: 2px;
  background: none;
  text-align: center;
}
.ruled {
  border-top: 1px solid #414147;
}
.slider-row.ruled {
  padding-bottom: 2px;
}
.checks {
  display: grid;
  grid-template-columns: 86px auto;
  gap: 5px 0;
  padding: 6px 10px 5px;
}
.checks label {
  display: flex;
  align-items: center;
  gap: 4px;
  height: 26px;
}
.checks .full {
  grid-column: span 2;
}
.checks input {
  width: 16px;
  height: 16px;
  appearance: none;
  border: 1px solid #54545b;
  border-radius: 2px;
}
.slider-row.last {
  height: 34px;
  padding-bottom: 8px;
  color: #77777a;
}
.last input {
  opacity: 0.6;
}
.last .num {
  color: #bbb;
}
.paint-foot {
  display: flex;
  align-items: center;
  gap: 9px;
  padding: 9px 13px;
}
.paint-foot svg {
  color: #1fa04c;
}
.paint-foot button {
  height: 23px;
  padding: 0 5px 1px;
  border: 1px solid #55555c;
  border-radius: 2px;
  background: #3f3e43;
}

/* notification */
.notice {
  position: absolute;
  right: 10px;
  bottom: 10px;
  display: flex;
  width: 374px;
  padding: 7px 7px 7px 6px;
  border: 1px solid #45454a;
  border-left: 8px solid #109c32;
  border-radius: 4px;
  background: #2e2d32;
  font-size: 13px;
  line-height: 15px;
}
.notice-btns {
  display: flex;
  flex-direction: column;
  align-items: center;
  justify-content: space-between;
  margin-left: auto;
  margin-top: -1px;
}
.close {
  width: 26px;
  height: 26px;
  border-radius: 50%;
  background: #3f3e43;
  color: #8b8b8e;
}
.mini {
  width: 12px;
  height: 12px;
  margin-left: 11px;
  border-radius: 50%;
  background: #3f3e43;
  color: #77777a;
}
```
